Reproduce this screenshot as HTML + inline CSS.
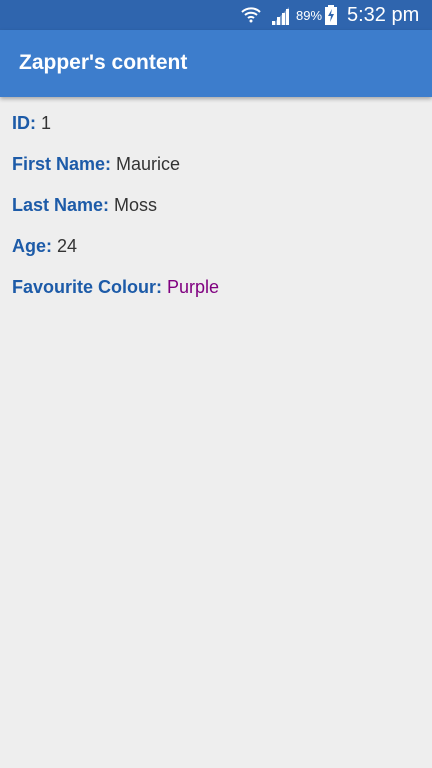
<!DOCTYPE html>
<html><head><style>
body{margin:0;width:432px;height:768px;background:#eeeeee;font-family:"Liberation Sans",sans-serif;overflow:hidden;position:relative}
.sb{position:absolute;top:0;left:0;width:432px;height:30px;background:#2f65ae;color:#fff}
.ab{position:absolute;top:30px;left:0;width:432px;height:67px;background:#3d7dcc;box-shadow:0 2px 4px rgba(0,0,0,.3)}
.ab div{position:absolute;left:19px;top:21px;font-size:21px;font-weight:bold;color:#fff}
.row{position:absolute;left:12px;font-size:18px;color:#333}
.row b{color:#1d5ba8}
</style></head><body>
<div class="sb">
<svg style="position:absolute;left:240px;top:4px" width="22" height="22" viewBox="0 0 22 22"><path d="M2 8a13 13 0 0 1 18 0M5 11a9 9 0 0 1 12 0M8 14a4.5 4.5 0 0 1 6 0" stroke="#fff" stroke-width="2" fill="none"/><circle cx="11" cy="17" r="1.5" fill="#fff"/></svg>
<svg style="position:absolute;left:270px;top:6px" width="20" height="20"><polygon points="2,19 19,19 19,1" fill="#fff" opacity=".35"/><rect x="2" y="15" width="3" height="4" fill="#fff"/><rect x="7" y="11" width="3" height="8" fill="#fff"/><rect x="12" y="7" width="3" height="12" fill="#fff"/><rect x="16" y="3" width="3" height="16" fill="#fff"/></svg>
<span style="position:absolute;left:296px;top:8px;font-size:13px">89%</span>
<svg style="position:absolute;left:325px;top:5px" width="12" height="20"><rect x="3" y="0" width="6" height="2" fill="#fff"/><rect x="0" y="2" width="12" height="18" fill="#fff"/><path d="M7 4L3 11h3l-1 6 4-8H6z" fill="#2f65ae"/></svg>
<span style="position:absolute;left:347px;top:4px;font-size:20px">5:32 pm</span>
</div>
<div class="ab"><div>Zapper's content</div></div>
<div class="row" style="top:113px"><b>ID:</b> 1</div>
<div class="row" style="top:154px"><b>First Name:</b> Maurice</div>
<div class="row" style="top:195px"><b>Last Name:</b> Moss</div>
<div class="row" style="top:236px"><b>Age:</b> 24</div>
<div class="row" style="top:277px"><b>Favourite Colour:</b> <span style="color:#800080">Purple</span></div>
</body></html>
